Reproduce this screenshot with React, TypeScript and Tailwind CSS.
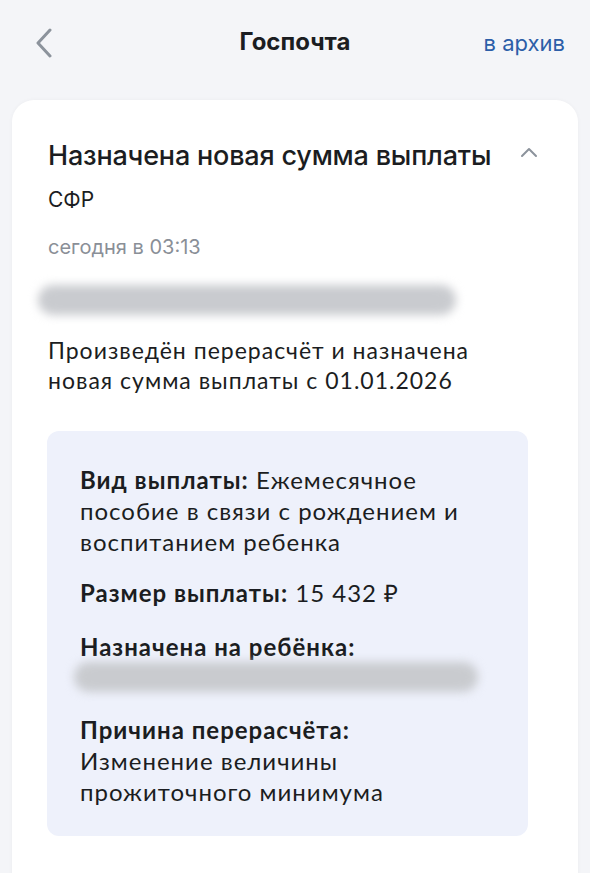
import React from "react";

const inter = { fontFamily: "Inter, Roboto, 'Noto Sans', sans-serif" };
const lato = { fontFamily: "Lato, 'Open Sans', sans-serif" };

const Blurred = ({ className }: { className: string }) => (
    <div className={`rounded-full bg-[#c9cbcf] blur-[5px] ${className}`} />
);

const App = () => {
    return (
        <div className="min-h-[873px] w-[590px] overflow-hidden bg-[#f4f5f8]" style={inter}>
            {/* шапка */}
            <div className="relative flex h-[86px] items-center justify-center">
                <svg
                    className="absolute left-[34px] top-[28px]"
                    width="20"
                    height="30"
                    viewBox="0 0 20 30"
                    fill="none"
                >
                    <path d="M16 2 L4 15 L16 28" stroke="#8c939c" strokeWidth="3" strokeLinecap="round" strokeLinejoin="round" />
                </svg>
                <h1 className="-mt-[2px] text-[24px] font-bold text-[#1b1d21]">Госпочта</h1>
                <span className="absolute right-[25px] top-[27px] text-[22px] text-[#2c5ea8]">в архив</span>
            </div>

            {/* карточка */}
            <div className="mx-[12px] mt-[14px] rounded-t-[22px] bg-white px-[36px] pt-[38px] pb-[60px] shadow-[0_0_4px_rgba(0,0,0,0.04)]">
                <div className="flex items-start justify-between">
                    <h2 className="text-[27px] font-medium leading-[36px] tracking-[-0.2px] text-[#1b1d21]">
                        Назначена новая сумма выплаты
                    </h2>
                    <svg className="mt-[8px] mr-[4px]" width="18" height="12" viewBox="0 0 18 12" fill="none">
                        <path d="M2 10 L9 3 L16 10" stroke="#8c939c" strokeWidth="2" strokeLinecap="round" strokeLinejoin="round" />
                    </svg>
                </div>
                <div className="mt-[12px] text-[21px] leading-[28px] text-[#1b1d21]">СФР</div>
                <div className="mt-[20px] text-[20px] leading-[26px] text-[#8a8f97]">сегодня в 03:13</div>

                <Blurred className="mt-[25px] -ml-[10px] h-[30px] w-[418px]" />

                <p className="mt-[20px] text-[23px] leading-[30px] tracking-[1px] text-[#1b1d21]" style={lato}>
                    Произведён перерасчёт и назначена
                    <br />
                    новая сумма выплаты с 01.01.2026
                </p>

                <div
                    className="mt-[36px] -ml-[1px] w-[481px] rounded-[12px] bg-[#eef1fb] px-[33px] pt-[33px] pb-[29px] text-[24px] leading-[31px] tracking-[1px] text-[#1b1d21]"
                    style={lato}
                >
                    <p>
                        <span className="font-bold">Вид выплаты:</span> Ежемесячное
                        <br />
                        пособие в связи с рождением и
                        <br />
                        воспитанием ребенка
                    </p>
                    <p className="mt-[20px]">
                        <span className="font-bold">Размер выплаты:</span> 15 432 ₽
                    </p>
                    <p className="mt-[23px] font-bold">Назначена на ребёнка:</p>
                    <Blurred className="-ml-[6px] h-[30px] w-[404px]" />
                    <p className="mt-[22px] font-bold">Причина перерасчёта:</p>
                    <p>
                        Изменение величины
                        <br />
                        прожиточного минимума
                    </p>
                </div>
            </div>
        </div>
    );
};

export default App;
